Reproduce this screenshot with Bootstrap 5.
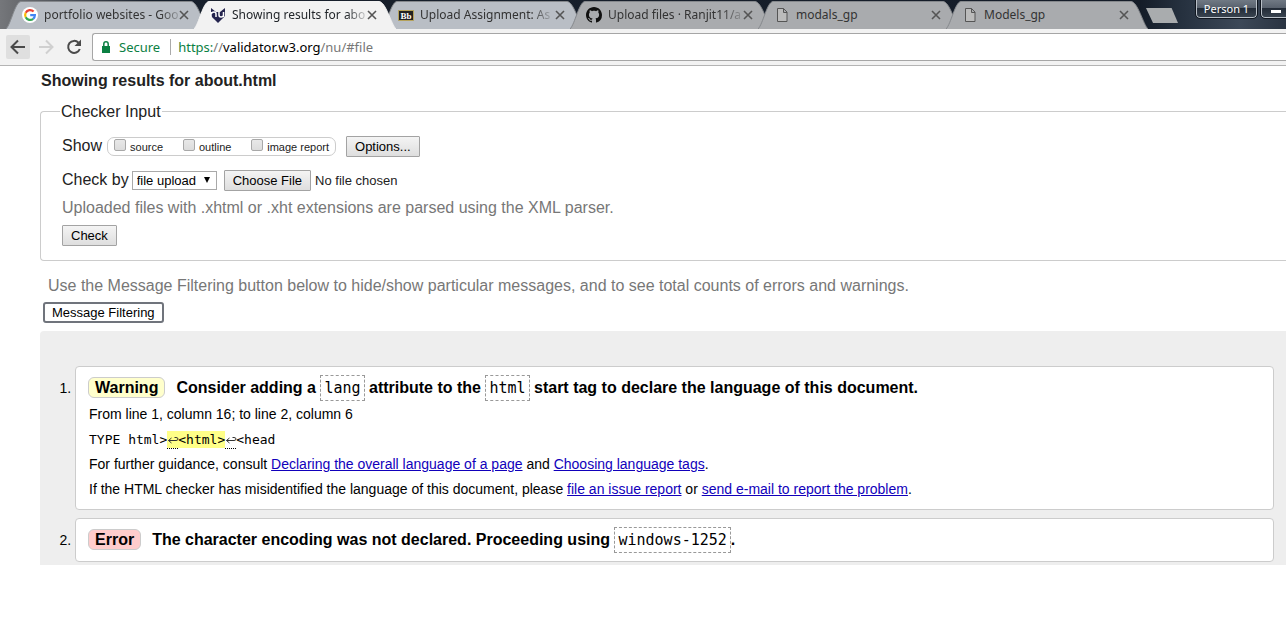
<!DOCTYPE html>
<html lang="en">
<head>
<meta charset="utf-8">
<meta name="viewport" content="width=device-width, initial-scale=1">
<title>Showing results for about.html</title>
<link href="https://cdn.jsdelivr.net/npm/bootstrap@5.3.0/dist/css/bootstrap.min.css" rel="stylesheet">
<style>
  body { font-family: "Liberation Sans", Arial, sans-serif; font-size: 16px; line-height: 24px; color: #222; background: #fff; overflow-x: hidden; }
  .chrome { font-family: "Noto Sans", "Open Sans", sans-serif; font-size: 12px; }

  /* tab strip */
  .tabstrip { height: 29px; padding: 1px 0 0 6px; background: linear-gradient(90deg, #75777b 0, #6d6f73 12px, #18202c 150px, #141c28 1140px, #25303e 1180px, #3c4858 1240px, #2a3442 100%); }
  .tab-item { width: 202px; height: 28px; margin-right: -14px; flex: none; padding: 0 19px 0 16px; position: relative; }
  .tab-shape { position: absolute; inset: 0; width: 100%; height: 100%; }
  .tab-shape path { fill: #a9abae; stroke: #85888c; }
  .tab-glass .tab-shape path { fill: #b9bec5; }
  .tab-active { z-index: 2; }
  .tab-active .tab-shape path { fill: #f2f2f2; stroke: #f2f2f2; }
  .tab-link { color: #333; text-decoration: none; white-space: nowrap; margin-left: 6px; line-height: 28px; position: relative; }
  .tab-fade { -webkit-mask-image: linear-gradient(90deg, #000 86%, rgba(0,0,0,.2)); mask-image: linear-gradient(90deg, #000 86%, rgba(0,0,0,.2)); }
  .tab-fav { width: 16px; height: 16px; flex: none; position: relative; }
  .tab-x { border: 0; background: none; padding: 0; width: 10px; height: 10px; margin-left: auto; line-height: 0; position: relative; flex: none; }
  .newtab { border: 0; background: #a9acae; width: 32px; height: 15px; margin: 7px 0 0 12px; padding: 0; clip-path: polygon(0 0, 80% 0, 100% 100%, 22% 100%); }
  .winbtn { height: 18px; border: 1px solid #b9c0c8; border-top: 0; border-radius: 0 0 4px 4px; outline: 1px solid #10161f; background: linear-gradient(#707984 0, #59626e 45%, #232c38 50%, #39434f 100%); color: #fff; line-height: 16px; font-size: 11px; padding: 0; margin-top: -1px; }
  .win-person { width: 61px; }
  .win-min { width: 25px; border-right: 0; border-bottom-right-radius: 0; }

  /* address bar */
  .toolbar { height: 37px; background: #f2f2f2; border-bottom: 1px solid #b4b4b4; padding: 4px 0 4px 6px; }
  .navbtn { border: 0; background: none; padding: 0; width: 24px; height: 24px; border-radius: 2px; line-height: 0; margin-right: 4px; }
  .navbtn.pressed { background: #dfdfdf; }
  .omnibox { border: 1px solid #a6a6a6; border-right: 0; border-radius: 3px 0 0 3px; background: #fff; height: 28px; font-size: 13px; margin-left: 2px; padding-left: 8px; color: #777; }
  .secure { color: #0b8043; }
  .omnibox .divider { width: 1px; height: 16px; background: #aaa; margin: 0 7px 0 10px; }

  /* validator page */
  .page { padding-left: 40px; }
  h1 { font-size: 16px; font-weight: 700; line-height: 20px; margin: 0; padding: 5px 0 9px 1px; }
  fieldset.checker { border: 1px solid #ccc; border-right: 0; border-radius: 4px 0 0 4px; padding: 12px 0 14px 21px; }
  fieldset.checker > legend { float: none; width: auto; font-size: 16px; line-height: 20px; margin: 0 0 0 -2px; padding: 2px 1px 0; }
  .opts { border: 1px solid #ccc; border-radius: 7px; height: 19px; font-size: 11px; line-height: 18px; width: 229px; padding: 0 6px; margin: 0 10px 0 5px; }
  .opts label { display: flex; align-items: center; padding-top: 1px; }
  .opts input { appearance: none; width: 12px; height: 12px; border: 1px solid #a8a8a8; border-radius: 2px; background: linear-gradient(#e8e8e8, #dcdcdc); margin: -4px 4px 0 0; }
  .plainbtn, .filepick::file-selector-button { border: 1px solid #a3a3a3; border-radius: 1px; background: linear-gradient(#f4f4f4, #dedede); color: #000; font-size: 13px; line-height: 17px; padding: 1px 8px; }
  .checkby { padding-top: 10px; }
  .filepick { font-size: 13px; line-height: 21px; height: 21px; width: 240px; margin-left: 7px; color: #222; }
  .filepick::file-selector-button { margin: 0 4px 0 0; height: 21px; }
  .picker { appearance: none; width: 85px; height: 19px; border: 1px solid #a9a9a9; border-radius: 0; font-size: 13px; line-height: 17px; padding: 0 4px; margin-left: 3px; color: #000;
    background: #fff url("data:image/svg+xml,%3Csvg xmlns='http://www.w3.org/2000/svg' width='8' height='8'%3E%3Cpath d='M1 1h6L4 7z'/%3E%3C/svg%3E") no-repeat right 5px center; }
  .hint { color: #777; margin: 0; }
  .checker .hint { padding: 4px 0 5px; }
  .filter-hint { padding: 13px 0 0 8px; }
  .filterbtn { border: 2px solid #70747c; border-radius: 3px; background: #fff; color: #000; font-size: 13px; line-height: 17px; padding: 0 7px; margin-left: 3px; }
  .results { background: #eee; border-radius: 4px 0 0 0; margin: 8px 0 0; padding: 35px 12px 3px 35px; font-size: 14px; line-height: 25px; color: #000; }
  .results > li { background: #fff; border: 1px solid #ccc; border-radius: 4px; padding: 6px 12px 7px; }
  .results > li + li { margin-top: 8px; }
  .results p { margin: 0; padding-left: 1px; }
  .results p.msg { font-size: 16px; font-weight: 700; line-height: 29px; padding: 0; }
  .tag { display: inline-block; border: 1px solid #ccc; border-radius: 6px; line-height: 19px; padding: 0 6px; margin-right: 11px; }
  .tag-warn { background: #ffc; }
  .tag-err { background: #fcc; }
  .msg code { font: 15px "DejaVu Sans Mono", monospace; color: #000; border: 1px dashed #999; padding: 3px; }
  .extract { font: 13px/25px "DejaVu Sans Mono", monospace; color: #000; }
  .extract b { font-weight: 400; background: #ff8; padding: 1px 0; }
  .nl { display: inline-block; width: 11px; height: 17px; line-height: 16px; border-bottom: 1px dotted #000; vertical-align: middle; }
  .nl svg { display: block; margin-top: 3px; }
  .results a { color: #1100bb; }
</style>
</head>
<body>
<header class="chrome">
  <nav class="tabstrip d-flex align-items-start" aria-label="Tabs">
    <div class="tab-item tab-glass d-flex align-items-center">
      <svg class="tab-shape" viewBox="0 0 202 28"><path d="M0 28 C5 23 9 1 15 .5H185C192 1 197 23 202 28"/></svg>
      <svg class="tab-fav" viewBox="0 0 16 16"><circle cx="8" cy="8" r="8" fill="#fff"/><g fill="none" stroke-width="2.2"><path d="M11.6 4.6A4.9 4.9 0 0 0 3.7 5.8" stroke="#ea4335"/><path d="M3.7 5.8A4.9 4.9 0 0 0 3.7 10.2" stroke="#fbbc05"/><path d="M3.7 10.2A4.9 4.9 0 0 0 11.2 11.8" stroke="#34a853"/><path d="M11.2 11.8A4.9 4.9 0 0 0 12.9 8.2H8.2" stroke="#4285f4"/></g></svg>
      <a class="tab-link tab-fade" href="#">portfolio websites - Goo</a>
      <button class="tab-x" aria-label="Close"><svg width="10" height="10" viewBox="0 0 10 10"><path d="M1 1l8 8M9 1l-8 8" stroke="#555" stroke-width="1.6"/></svg></button>
    </div>
    <div class="tab-item tab-active d-flex align-items-center">
      <svg class="tab-shape" viewBox="0 0 202 28"><path d="M0 28 C5 23 9 1 15 .5H185C192 1 197 23 202 28"/></svg>
      <svg class="tab-fav" viewBox="0 0 16 16"><path d="M1 1l5 4h4l5-4v8l-3 3-4 4-4-4-3-3z" fill="#24244e"/><path d="M1 10V5M1 7Q2 5 4 5Q6 5 6 7V10M9 5v3Q9 10 11 10Q13.500 10 13.500 8V5M13.500 8v2" fill="none" stroke="#fff" stroke-width="1.500"/></svg>
      <a class="tab-link tab-fade text-dark" href="#">Showing results for abo</a>
      <button class="tab-x" aria-label="Close"><svg width="10" height="10" viewBox="0 0 10 10"><path d="M1 1l8 8M9 1l-8 8" stroke="#555" stroke-width="1.6"/></svg></button>
    </div>
    <div class="tab-item tab-glass d-flex align-items-center">
      <svg class="tab-shape" viewBox="0 0 202 28"><path d="M0 28 C5 23 9 1 15 .5H185C192 1 197 23 202 28"/></svg>
      <svg class="tab-fav" viewBox="0 0 16 16"><path d="M.5 3.500h15v10H.5z" fill="#222" stroke="#b5a25c"/><text x="8" y="12" text-anchor="middle" font-family="Liberation Serif" font-weight="bold" font-size="9" fill="#fff">Bb</text></svg>
      <a class="tab-link tab-fade" href="#">Upload Assignment: As</a>
      <button class="tab-x" aria-label="Close"><svg width="10" height="10" viewBox="0 0 10 10"><path d="M1 1l8 8M9 1l-8 8" stroke="#555" stroke-width="1.6"/></svg></button>
    </div>
    <div class="tab-item d-flex align-items-center">
      <svg class="tab-shape" viewBox="0 0 202 28"><path d="M0 28 C5 23 9 1 15 .5H185C192 1 197 23 202 28"/></svg>
      <svg class="tab-fav" viewBox="0 0 16 16"><path fill="#111" d="M8 0C3.580 0 0 3.580 0 8c0 3.540 2.290 6.530 5.470 7.590.4.070.55-.17.55-.38 0-.19-.01-.82-.01-1.490-2.010.37-2.530-.49-2.690-.94-.09-.23-.48-.94-.82-1.130-.28-.15-.68-.52-.01-.53.63-.01 1.080.58 1.230.82.72 1.210 1.870.87 2.330.66.07-.52.28-.87.51-1.070-1.780-.2-3.640-.89-3.640-3.950 0-.87.31-1.590.82-2.150-.08-.2-.36-1.020.08-2.120 0 0 .67-.21 2.200.82.64-.18 1.320-.27 2-.27s1.360.09 2 .27c1.530-1.040 2.200-.82 2.200-.82.44 1.100.16 1.920.08 2.120.51.56.82 1.270.82 2.150 0 3.070-1.870 3.750-3.650 3.950.29.25.54.73.54 1.480 0 1.070-.01 1.930-.01 2.200 0 .21.15.46.55.38A8.01 8.01 0 0 0 16 8c0-4.420-3.580-8-8-8z"/></svg>
      <a class="tab-link tab-fade" href="#">Upload files · Ranjit11/a</a>
      <button class="tab-x" aria-label="Close"><svg width="10" height="10" viewBox="0 0 10 10"><path d="M1 1l8 8M9 1l-8 8" stroke="#555" stroke-width="1.6"/></svg></button>
    </div>
    <div class="tab-item d-flex align-items-center">
      <svg class="tab-shape" viewBox="0 0 202 28"><path d="M0 28 C5 23 9 1 15 .5H185C192 1 197 23 202 28"/></svg>
      <svg class="tab-fav" viewBox="0 0 16 16"><path d="M3.500 1.500h6l3.500 3.500v9.500h-9.500zM9.500 1.500v4H13" fill="#bbb" stroke="#555"/></svg>
      <a class="tab-link" href="#">modals_gp</a>
      <button class="tab-x" aria-label="Close"><svg width="10" height="10" viewBox="0 0 10 10"><path d="M1 1l8 8M9 1l-8 8" stroke="#555" stroke-width="1.6"/></svg></button>
    </div>
    <div class="tab-item d-flex align-items-center">
      <svg class="tab-shape" viewBox="0 0 202 28"><path d="M0 28 C5 23 9 1 15 .5H185C192 1 197 23 202 28"/></svg>
      <svg class="tab-fav" viewBox="0 0 16 16"><path d="M3.500 1.500h6l3.500 3.500v9.500h-9.500zM9.500 1.500v4H13" fill="#bbb" stroke="#555"/></svg>
      <a class="tab-link" href="#">Models_gp</a>
      <button class="tab-x" aria-label="Close"><svg width="10" height="10" viewBox="0 0 10 10"><path d="M1 1l8 8M9 1l-8 8" stroke="#555" stroke-width="1.6"/></svg></button>
    </div>
    <button class="newtab" aria-label="New tab"></button>
    <div class="ms-auto d-flex gap-1">
      <button class="winbtn win-person">Person 1</button>
      <button class="winbtn win-min" aria-label="Minimize"><svg width="12" height="6" viewBox="0 0 12 6" class="d-block ms-auto me-1 mt-1"><path d="M1 2h10v3H1z" fill="#fff"/></svg></button>
    </div>
  </nav>
  <div class="toolbar d-flex align-items-center">
    <button class="navbtn pressed" aria-label="Back"><svg width="24" height="24" viewBox="0 0 24 24"><path d="M19 12H6M12 5.500L5.500 12l6.500 6.500" fill="none" stroke="#4a4a4a" stroke-width="2"/></svg></button>
    <button class="navbtn" aria-label="Forward"><svg width="24" height="24" viewBox="0 0 24 24"><path d="M5 12h13M12 5.500l6.500 6.500-6.500 6.500" fill="none" stroke="#d0d0d0" stroke-width="2"/></svg></button>
    <button class="navbtn" aria-label="Reload"><svg width="24" height="24" viewBox="0 0 24 24"><path d="M16.500 7.700A6 6 0 1 0 17.800 14" fill="none" stroke="#4a4a4a" stroke-width="2"/><path d="M19 4.500V11h-6.500z" fill="#4a4a4a"/></svg></button>
    <div class="omnibox flex-grow-1 d-flex align-items-center">
      <svg width="10" height="12" viewBox="0 0 10 12"><path d="M1 5h8v7H1z" fill="#0b8043"/><path d="M2.800 5V3a2.200 2.200 0 0 1 4.400 0v2" fill="none" stroke="#0b8043" stroke-width="1.500"/></svg>
      <span class="secure ms-2">Secure</span><span class="divider"></span>
      <span><span class="secure">https:</span>//<span class="text-black">validator.w3.org</span>/nu/#file</span>
    </div>
  </div>
</header>

<main class="page">
  <h1>Showing results for about.html</h1>
  <form onsubmit="return false">
    <fieldset class="checker">
      <legend>Checker Input</legend>
      <div class="d-flex align-items-center">
        <span>Show</span>
        <div class="opts d-flex justify-content-between">
          <label><input type="checkbox">source</label>
          <label><input type="checkbox">outline</label>
          <label><input type="checkbox">image report</label>
        </div>
        <button type="button" class="plainbtn">Options...</button>
      </div>
      <div class="checkby d-flex align-items-center">
        <label for="by">Check by</label>
        <select id="by" class="picker"><option>file upload</option></select>
        <input type="file" class="filepick" aria-label="File to check">
      </div>
      <p class="hint">Uploaded files with .xhtml or .xht extensions are parsed using the XML parser.</p>
      <button type="submit" class="plainbtn d-block">Check</button>
    </fieldset>
  </form>
  <p class="hint filter-hint">Use the Message Filtering button below to hide/show particular messages, and to see total counts of errors and warnings.</p>
  <button type="button" class="filterbtn d-block mt-1">Message Filtering</button>
  <ol class="results">
    <li>
      <p class="msg"><span class="tag tag-warn">Warning</span>Consider adding a <code>lang</code> attribute to the <code>html</code> start tag to declare the language of this document.</p>
      <p>From line 1, column 16; to line 2, column 6</p>
      <p class="extract">TYPE html&gt;<b><span class="nl"><svg width="12" height="10" viewBox="0 0 12 10"><path d="M4.500 3L1.500 5.500l3 2.500M1.500 5.500H9q2 0 2-1.500T9 2.500H7.500" fill="none" stroke="#333"/></svg></span>&lt;html&gt;</b><span class="nl"><svg width="12" height="10" viewBox="0 0 12 10"><path d="M4.500 3L1.500 5.500l3 2.500M1.500 5.500H9q2 0 2-1.500T9 2.500H7.500" fill="none" stroke="#333"/></svg></span>&lt;head</p>
      <p>For further guidance, consult <a href="#">Declaring the overall language of a page</a> and <a href="#">Choosing language tags</a>.</p>
      <p>If the HTML checker has misidentified the language of this document, please <a href="#">file an issue report</a> or <a href="#">send e-mail to report the problem</a>.</p>
    </li>
    <li>
      <p class="msg"><span class="tag tag-err">Error</span>The character encoding was not declared. Proceeding using <code>windows-1252</code>.</p>
    </li>
  </ol>
</main>
<script src="https://cdn.jsdelivr.net/npm/bootstrap@5.3.0/dist/js/bootstrap.bundle.min.js"></script>
</body>
</html>
